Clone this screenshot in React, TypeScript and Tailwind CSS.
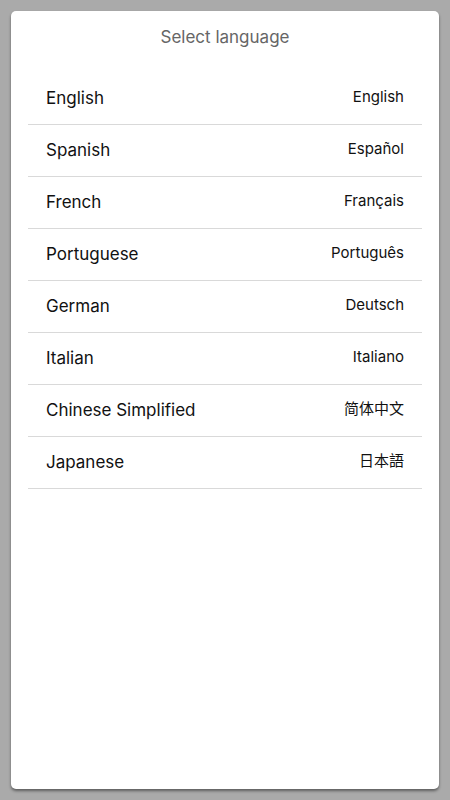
import React from 'react';

const languages = [
  { name: 'English', native: 'English' },
  { name: 'Spanish', native: 'Español' },
  { name: 'French', native: 'Français' },
  { name: 'Portuguese', native: 'Português' },
  { name: 'German', native: 'Deutsch' },
  { name: 'Italian', native: 'Italiano' },
  { name: 'Chinese Simplified', native: '简体中文' },
  { name: 'Japanese', native: '日本語' },
];

export default function App() {
  return (
    <div
      className="min-h-screen bg-[#aaaaaa] p-[11px] flex"
      style={{ fontFamily: 'Inter, "Noto Sans CJK SC", sans-serif' }}
    >
      <div className="flex-1 bg-white rounded-[5px] shadow-[0_2px_3px_rgba(0,0,0,0.45)] px-[17px] flex flex-col">
        <h1 className="h-[52px] pt-[14px] text-center text-[17px] text-[#666666] font-normal leading-[24px]">
          Select language
        </h1>
        <ul className="mt-[10px]">
          {languages.map((lang) => (
            <li
              key={lang.name}
              className="h-[52px] px-[18px] flex items-center justify-between border-b border-[#d9d9d9] text-[#111111]"
            >
              <span className="text-[17px] mt-[1px]">{lang.name}</span>
              <span className="text-[15px] -mt-[3px]">{lang.native}</span>
            </li>
          ))}
        </ul>
      </div>
    </div>
  );
}
